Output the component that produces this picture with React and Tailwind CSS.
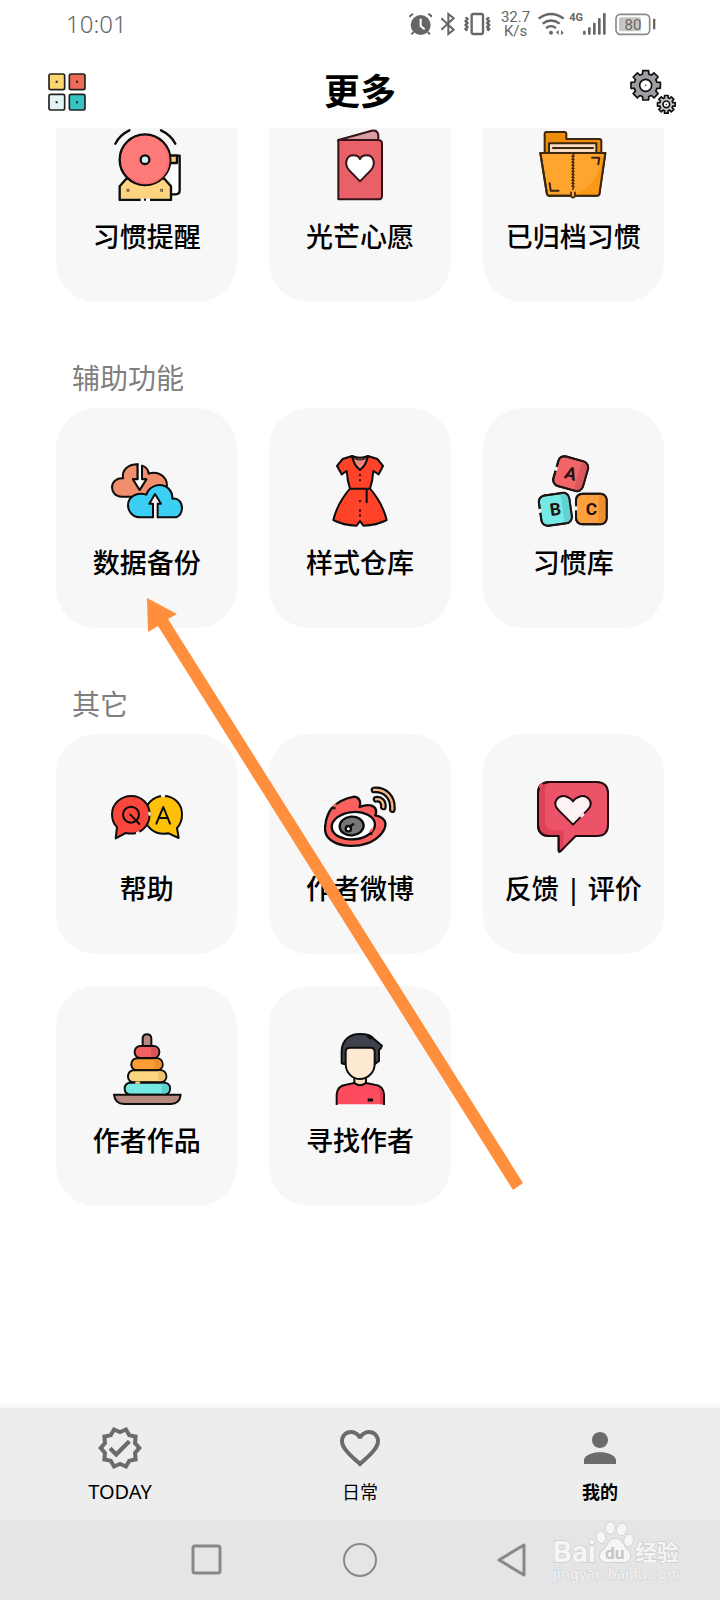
import React, { useState } from 'react';
import { MdFavoriteBorder, MdOutlineVerified, MdPerson } from 'react-icons/md';

const INK = '#0d0d0d';

// Outline of a toothed wheel, eight teeth by default
const gearPath = (cx, cy, outer, inner, teeth = 8) => {
  const points = [];
  for (let i = 0; i < teeth; i++) {
    const base = (i * 2 * Math.PI) / teeth - Math.PI / 2;
    [
      [-0.27, inner],
      [-0.2, outer],
      [0.2, outer],
      [0.27, inner],
    ].forEach(([offset, r]) => {
      points.push(`${(cx + r * Math.cos(base + offset)).toFixed(1)} ${(cy + r * Math.sin(base + offset)).toFixed(1)}`);
    });
  }
  return `M${points.join('L')}Z`;
};

const TileIcon = ({ children, stroke = INK, width = 6 }) => (
  <svg
    viewBox="0 0 216 216"
    className="size-[72px]"
    fill="none"
    stroke={stroke}
    strokeWidth={width}
    strokeLinecap="round"
    strokeLinejoin="round"
    aria-hidden="true"
  >
    {children}
  </svg>
);

const BellIcon = () => (
  <TileIcon width={7}>
    <path d="M13 44Q26 18 55 4M150 4Q180 18 193 44" />
    <path d="M181 80H206V184Q206 196 194 196H181" fill="#fff" />
    <path d="M176 80H198V102H180" fill="#f8cd7b" />
    <path d="M26 213V172L46 149H160L180 172V213Z" fill="#fdd580" />
    <circle cx="102" cy="92" r="76" fill="#fd7a79" />
    <path d="M160 52A70 70 0 0 1 68 154" stroke="#f06a6c" strokeWidth="4" />
    <circle cx="102" cy="92" r="13" fill="#d9f3f3" />
    <circle cx="51" cy="184" r="1" />
    <circle cx="152" cy="184" r="1" />
    <path d="M89 212H117" stroke="#fff" strokeWidth="8" strokeLinecap="butt" />
    <path d="M102 212h.1" />
  </TileIcon>
);

const WishIcon = () => (
  <TileIcon stroke="#351419">
    <path d="M43 33L143 5Q160 2 163 18V36H43Z" fill="#d99ca0" />
    <path d="M43 33H163Q174 34 174 44V200Q174 211 163 211H43Z" fill="#e96168" />
    <path
      d="M108 157L76 124C58 104 68 79 88 79C98 79 105 84 108 90C111 84 118 79 128 79C148 79 158 104 140 124Z"
      fill="#fff"
    />
  </TileIcon>
);

const FolderIcon = () => (
  <TileIcon stroke="#3b2610">
    <path d="M23 74V14Q23 9 28 9H82Q88 9 88 15V30H187Q193 30 193 36V74Z" fill="#ee8d0c" />
    <path d="M36 72V43H178V72" fill="#fbdcc3" />
    <path d="M48 57H168" />
    <path d="M10 72H205L187 196Q186 200 181 200H36Q31 200 30 196Z" fill="#ffa42d" />
    <path d="M201 86L185 197H110C150 186 192 150 192 76H202Z" fill="#fb9815" stroke="none" />
    <path d="M10 72H205L187 196Q186 200 181 200H36Q31 200 30 196Z" />
    <path
      d="M111 76L105 82H111L105 91H111L105 100H111L105 109H111L105 118H111L105 127H111L105 136H111L105 145H111L105 154H111L105 163H111L105 172H111L107 182"
      strokeWidth="4"
    />
    <path d="M166 86H187L184 105M38 163L41 185H64" strokeLinecap="square" />
    <path d="M102 190V199Q103 206 108 206Q113 206 114 199V190" fill="#ffa42d" strokeWidth="5" />
  </TileIcon>
);

const CloudIcon = () => (
  <TileIcon>
    <path
      d="M60 125H32C12 125 3 110 3 97C3 80 18 68 36 70C32 46 50 28 80 28V73H66L86 105L106 73H93V32C106 36 112 46 113 56C140 46 168 64 168 92L140 125Z"
      fill="#f18e6d"
    />
    <path d="M80 28V73H66L86 105L106 73H93V32" fill="#fff" />
    <path
      d="M126 187H88C66 187 51 170 51 151C51 126 77 109 106 119C111 100 130 90 145 90C170 90 186 110 184 131C202 128 213 142 213 159C213 176 203 187 190 187H140"
      fill="#3bcff5"
    />
    <path d="M126 187V146H115L132 117L150 146H140V187" fill="#fbeef4" />
    <path d="M130 187H136" stroke="#fbeef4" strokeLinecap="butt" />
  </TileIcon>
);

const DressIcon = () => (
  <TileIcon>
    <path d="M84 3Q108 14 132 3L128 26L108 46L88 26Z" fill="#f0877f" />
    <path
      d="M84 3Q90 32 108 45Q126 32 132 3L160 12L177 33L164 58L148 48Q146 78 138 101Q176 145 188 195Q158 211 118 212L108 198L98 212Q58 211 28 195Q40 145 78 101Q70 78 68 48L53 58L39 33L56 12Z"
      fill="#ff4328"
    />
    <path d="M78 101H138M128 101V142" />
    <path d="M92 12Q108 19 124 12" strokeWidth="3" />
    <path d="M108 60v1M108 75v1M108 138v1M108 166v1M108 181v1" />
    <path d="M46 192L48 196M170 192L168 196" stroke="#c92712" strokeWidth="3" />
  </TileIcon>
);

const Block = ({ cx, cy, angle, letter, fill, shade }) => (
  <g transform={`translate(${cx} ${cy}) rotate(${angle})`}>
    <rect x="-46" y="-46" width="92" height="92" rx="19" fill={fill} />
    <path d="M22 -46H28Q46 -46 46 -28V28Q46 46 28 46H22Z" fill={shade} stroke="none" />
    <rect x="-46" y="-46" width="92" height="92" rx="19" />
    <path d="M-46 -8V4" stroke="#f7f7f7" strokeWidth="8" strokeLinecap="butt" />
    <text
      y="18"
      textAnchor="middle"
      stroke="none"
      fill="#201013"
      className="font-[family-name:Roboto,sans-serif] text-[52px] font-bold"
    >
      {letter}
    </text>
  </g>
);

const BlocksIcon = () => (
  <TileIcon stroke="#1c1413">
    <Block cx={101} cy={56} angle={16} letter="A" fill="#f26468" shade="#d9565d" />
    <Block cx={55} cy={163} angle={-8} letter="B" fill="#74e9e5" shade="#62d3d2" />
    <Block cx={163} cy={162} angle={0} letter="C" fill="#fd9f3c" shade="#ee8f2e" />
  </TileIcon>
);

const HelpIcon = () => (
  <TileIcon>
    <path
      d="M158 45C190 45 213 69 213 100C213 117 208 131 198 141L203 171L173 157C130 165 101 137 101 101C101 70 127 45 158 45Z"
      fill="#ffc107"
    />
    <path
      d="M61 45C92 45 116 69 116 100C116 137 85 165 44 156L14 172L18 138C8 129 3 115 3 100C3 69 29 45 61 45Z"
      fill="#fb463b"
    />
    <path d="M153 45h6M78 156l5-2M115 96l1 5" stroke="#f7f7f7" strokeWidth="7" />
    <circle cx="60" cy="101" r="24" />
    <path d="M58 101L85 129M136 128L157 78L177 128M143 111H171" />
  </TileIcon>
);

const WeiboIcon = () => (
  <TileIcon width={7}>
    <path
      d="M23 82C44 59 68 51 91 47C107 49 111 63 107 78C120 73 133 71 143 74C157 80 159 90 154 103C169 106 182 112 184 126C187 151 158 178 127 188C102 197 61 198 33 185C8 173 0 155 4 133C6 112 12 96 23 82Z"
      fill="#fb605d"
    />
    <ellipse cx="88" cy="134" rx="65" ry="41" transform="rotate(-5 88 134)" fill="#fff" />
    <ellipse cx="83" cy="135" rx="36" ry="28" transform="rotate(-5 83 135)" fill="#777" />
    <circle cx="73" cy="143" r="8" fill="#fff" />
    <path d="M79 136L88 130" />
    <path d="M29 76L35 71M139 151L145 145" stroke="#fb605d" />
    <path d="M31 81v1M142 158v1" />
    <path d="M150 27C184 25 208 48 205 86" strokeWidth="20" />
    <path d="M156 55C169 52 180 62 178 78" strokeWidth="20" />
    <path d="M150 27C184 25 208 48 205 86M156 55C169 52 180 62 178 78" stroke="#f8b98a" />
  </TileIcon>
);

const FeedbackIcon = () => (
  <TileIcon stroke="#210b0e">
    <path
      d="M37 3H179Q213 4 213 37V132Q213 165 179 165H116L70 211Q65 215 65 208V165H37Q3 164 3 131V37Q3 4 37 3Z"
      fill="#ec5369"
    />
    <path
      d="M37 5Q24 12 24 38V118Q24 148 54 148H80V165L79 200L68 210L67 163H37Q6 162 6 131V37Q6 7 37 5Z"
      fill="#dd4259"
      stroke="none"
    />
    <path d="M79 202L70 211Q65 215 65 208V165H37Q3 164 3 131V37Q3 4 37 3" />
    <path d="M9 17L15 10" stroke="#ec5369" strokeWidth="7" />
    <path
      d="M108 131L66 89C40 63 67 36 91 48C100 51 105 56 108 61C111 56 116 51 125 48C149 36 176 63 150 89Z"
      fill="#fdf3f4"
    />
    <path d="M133 106L139 100" stroke="#fdf3f4" strokeWidth="7" />
  </TileIcon>
);

const RINGS = [
  { x: 71, y: 39, w: 74, fill: '#f3605f', shade: '#d95459' },
  { x: 61, y: 76, w: 94, fill: '#fd9d38', shade: '#ed8d2d' },
  { x: 51, y: 112, w: 115, fill: '#fbd57f', shade: '#efc370' },
  { x: 41, y: 149, w: 136, fill: '#74e8e3', shade: '#60d0d0' },
];

const StackIcon = () => (
  <TileIcon>
    <path d="M95 40V16Q96 4 108 4Q120 4 121 16V40" fill="#b58880" />
    {RINGS.map((ring) => (
      <g key={ring.y}>
        <rect x={ring.x} y={ring.y} width={ring.w} height="36" rx="17" fill={ring.fill} />
        <path
          d={`M${ring.x + ring.w - 25} ${ring.y + 3}h8q14 2 14 15t-14 15h-8Z`}
          fill={ring.shade}
          stroke="none"
        />
      </g>
    ))}
    <path d="M9 185H209Q207 213 179 213H39Q12 213 9 185Z" fill="#b58880" />
    <path d="M76 149h8" stroke="#fbd57f" strokeWidth="7" />
  </TileIcon>
);

const PersonIcon = () => (
  <TileIcon>
    <path
      d="M53 91V54C54 20 78 3 108 3C128 3 143 8 150 18L174 38Q171 48 165 51V84L153 93H60Z"
      fill="#3f424d"
    />
    <path d="M91 134V150Q108 164 126 150V134Z" fill="#fbe0c2" />
    <path d="M38 214V184Q40 158 66 155L91 150Q108 164 126 150L152 155Q178 158 180 184V214" fill="#fc4c5e" />
    <path d="M154 158Q176 161 177 186V214H168V184Q168 166 154 158Z" fill="#dd3d50" stroke="none" />
    <path d="M65 56Q65 44 78 44H140Q152 44 152 56V92C152 120 130 138 108 138C86 138 65 120 65 92Z" fill="#feead2" />
    <path d="M134 11L140 15" strokeWidth="9" />
    <path d="M131 201H147" strokeWidth="9" strokeLinecap="butt" />
  </TileIcon>
);

const MenuIcon = () => (
  <svg viewBox="0 0 114 114" className="size-[38px]" stroke="#26211f" strokeWidth="5" aria-hidden="true">
    <rect x="3" y="3" width="47" height="47" rx="5" fill="#fbd56d" />
    <rect x="64" y="3" width="47" height="47" rx="5" fill="#ec6b57" />
    <rect x="3" y="64" width="47" height="47" rx="5" fill="#e2f3f5" />
    <rect x="64" y="64" width="47" height="47" rx="5" fill="#35c4c2" />
    <path d="M23 26h6M84 26h6M23 88h6M84 88h6" strokeWidth="6" />
  </svg>
);

const GearsIcon = () => (
  <svg viewBox="0 0 138 138" className="size-[46px]" stroke="#111" strokeWidth="5" strokeLinejoin="round" aria-hidden="true">
    <path d={gearPath(47, 49, 45, 35)} fill="#9e9ea3" />
    <circle cx="47" cy="49" r="18" fill="#fff" />
    <circle cx="47" cy="49" r="1" strokeWidth="3" />
    <path d={gearPath(109, 106, 27, 20)} fill="#c9c9ce" />
    <circle cx="109" cy="106" r="10" fill="#fff" />
    <circle cx="109" cy="106" r="1" strokeWidth="3" />
  </svg>
);

const StatusBar = () => (
  <div className="flex h-12 items-center justify-between pr-16 pl-[66px] text-[#666]">
    <time className="font-['Noto_Sans',sans-serif] text-2xl font-light">10:01</time>
    <div className="flex h-6 items-center">
      <svg viewBox="0 0 72 72" className="h-6 w-6" fill="none" stroke="currentColor" strokeWidth="6" aria-hidden="true">
        <circle cx="38" cy="39" r="30" fill="currentColor" stroke="none" />
        <path d="M38 20V42L50 52" stroke="#fff" strokeWidth="6" />
        <path d="M4 14L15 5M61 5L72 14M17 60L10 67M59 60L66 67" />
      </svg>
      <svg viewBox="0 0 48 72" className="ml-2 h-6 w-4" fill="none" stroke="currentColor" strokeWidth="6" aria-hidden="true">
        <path d="M4 19L41 53L25 66V6L41 19L4 53" />
      </svg>
      <svg viewBox="0 0 81 72" className="ml-2 h-6 w-[27px]" fill="none" stroke="currentColor" aria-hidden="true">
        <rect x="23" y="6" width="34" height="60" rx="5" strokeWidth="7" />
        <path
          d="M5 16L10 21L5 27L10 33L5 39L10 45L5 51L10 56M75 16L70 21L75 27L70 33L75 39L70 45L75 51L70 56"
          strokeWidth="8"
        />
      </svg>
      <div className="ml-2.5 flex flex-col items-center font-[family-name:Roboto,sans-serif] text-[15px] leading-[14px]">
        <span>32.7</span>
        <span>K/s</span>
      </div>
      <svg viewBox="0 0 81 72" className="ml-2 h-6 w-[27px]" fill="none" stroke="currentColor" strokeWidth="7" aria-hidden="true">
        <path d="M2 20Q39 -8 77 20M14 35Q39 16 65 35M24 48Q39 37 54 48" />
        <circle cx="39" cy="62" r="6" fill="currentColor" stroke="none" />
        <path d="M62 54V69L54 61ZM69 54V69L77 63Z" fill="currentColor" stroke="none" />
      </svg>
      <span className="ml-1 self-start font-[family-name:Roboto,sans-serif] text-[11px] leading-3 font-bold">4G</span>
      <svg viewBox="0 0 72 72" className="h-6 w-6" fill="currentColor" aria-hidden="true">
        <rect x="0" y="56" width="8" height="12" rx="3" />
        <rect x="15" y="46" width="8" height="22" rx="3" />
        <rect x="30" y="32" width="8" height="36" rx="3" />
        <rect x="45" y="18" width="8" height="50" rx="3" />
        <rect x="60" y="3" width="8" height="65" rx="3" />
      </svg>
      <svg viewBox="0 0 123 72" className="ml-2 h-6 w-[41px]" fill="none" aria-hidden="true">
        <rect x="3" y="7" width="101" height="60" rx="13" stroke="#8a8a8a" strokeWidth="5" />
        <rect x="12" y="16" width="66" height="42" rx="5" fill="#c6c6c6" />
        <rect x="114" y="20" width="7" height="32" rx="2" fill="currentColor" />
        <text
          x="54"
          y="53"
          textAnchor="middle"
          fill="currentColor"
          className="font-[family-name:Roboto,sans-serif] text-[45px]"
        >
          80
        </text>
      </svg>
    </div>
  </div>
);

const SECTIONS = [
  {
    title: null,
    items: [
      { label: '习惯提醒', icon: BellIcon },
      { label: '光芒心愿', icon: WishIcon },
      { label: '已归档习惯', icon: FolderIcon },
    ],
  },
  {
    title: '辅助功能',
    items: [
      { label: '数据备份', icon: CloudIcon },
      { label: '样式仓库', icon: DressIcon },
      { label: '习惯库', icon: BlocksIcon },
    ],
  },
  {
    title: '其它',
    items: [
      { label: '帮助', icon: HelpIcon },
      { label: '作者微博', icon: WeiboIcon },
      { label: '反馈 | 评价', icon: FeedbackIcon },
      { label: '作者作品', icon: StackIcon },
      { label: '寻找作者', icon: PersonIcon },
    ],
  },
];

const Tile = ({ label, icon: Icon }) => (
  <button
    type="button"
    className="flex flex-col items-center rounded-[40px] bg-[#f7f7f7] py-[47px] text-[27px] leading-9 font-medium whitespace-nowrap text-black"
  >
    <Icon />
    <span className="mt-[18px]">{label}</span>
  </button>
);

const Section = ({ title, items }) => (
  <section>
    {title && <h2 className="mb-3 px-4 text-[28px] leading-9 text-[#7f7f7f]">{title}</h2>}
    <div className="grid grid-cols-3 gap-8">
      {items.map((item) => (
        <Tile key={item.label} {...item} />
      ))}
    </div>
  </section>
);

const TABS = [
  { id: 'today', label: 'TODAY', icon: MdOutlineVerified, text: 'text-xl' },
  { id: 'daily', label: '日常', icon: MdFavoriteBorder, text: 'text-lg' },
  { id: 'mine', label: '我的', icon: MdPerson, text: 'text-lg' },
];

const TabBar = ({ active, onChange }) => (
  <nav className="grid h-28 grid-cols-3 bg-[#ededed] shadow-[0_-2px_6px_rgba(0,0,0,0.05)]">
    {TABS.map(({ id, label, icon: Icon, text }) => (
      <button
        key={id}
        type="button"
        onClick={() => onChange(id)}
        className="flex flex-col items-center justify-center gap-2"
      >
        <Icon className="size-12 text-[#6b6b6b]" />
        <span className={`${text} leading-6 text-black ${active === id ? 'font-bold' : 'font-normal'}`}>{label}</span>
      </button>
    ))}
  </nav>
);

const Watermark = () => (
  <svg
    viewBox="0 0 384 192"
    className="pointer-events-none absolute right-10 bottom-4 h-16 w-32"
    fill="#f6f6f6"
    stroke="#cdcdcd"
    strokeWidth="4"
    paintOrder="stroke"
    aria-hidden="true"
  >
    <text x="2" y="126" className="font-[family-name:Roboto,sans-serif] text-[90px] font-bold">Bai</text>
    <ellipse cx="147" cy="52" rx="13" ry="18" transform="rotate(-12 147 52)" />
    <ellipse cx="175" cy="24" rx="13" ry="18" />
    <ellipse cx="209" cy="28" rx="14" ry="18" transform="rotate(12 209 28)" />
    <ellipse cx="230" cy="61" rx="13" ry="18" transform="rotate(16 230 61)" />
    <path d="M190 56C212 56 214 78 226 90C240 104 238 126 216 126H164C140 126 138 102 154 90C168 80 168 56 190 56Z" />
    <text
      x="188"
      y="116"
      textAnchor="middle"
      fill="#c6c6c6"
      stroke="none"
      className="font-[family-name:Roboto,sans-serif] text-[52px] font-bold"
    >
      du
    </text>
    <text x="250" y="120" className="font-['Noto_Sans_CJK_SC',sans-serif] text-[65px] font-bold">经验</text>
    <text x="4" y="176" strokeWidth="3" className="font-['Noto_Sans',sans-serif] text-[44px]">jingyan.baidu.com</text>
  </svg>
);

const SystemBar = () => (
  <div className="relative flex h-20 items-center justify-center gap-[114px] bg-[#e5e5e5] text-[#888]">
    <button type="button" aria-label="recent apps" className="flex size-10 items-center justify-center">
      <svg viewBox="0 0 36 36" className="size-9" fill="none" stroke="currentColor" strokeWidth="3">
        <rect x="5" y="4" width="27" height="27" rx="2" />
      </svg>
    </button>
    <button type="button" aria-label="home" className="flex size-10 items-center justify-center">
      <svg viewBox="0 0 36 36" className="size-9" fill="none" stroke="currentColor" strokeWidth="2">
        <circle cx="18" cy="18" r="16" />
      </svg>
    </button>
    <button type="button" aria-label="back" className="flex size-10 items-center justify-center">
      <svg viewBox="0 0 36 36" className="size-9" fill="none" stroke="currentColor" strokeWidth="3" strokeLinejoin="round">
        <path d="M28 3V33L3 18Z" />
      </svg>
    </button>
    <Watermark />
  </div>
);

const PointerArrow = () => (
  <svg
    width="400"
    height="610"
    viewBox="140 590 400 610"
    className="pointer-events-none absolute top-[590px] left-[140px]"
    fill="#ff8f3c"
    aria-hidden="true"
  >
    <path d="M147 598L177 614L168 619L523 1183L513 1190L158 626L148 632Z" />
  </svg>
);

export default function App() {
  const [tab, setTab] = useState('mine');

  return (
    <div className="relative flex min-h-screen flex-col bg-white font-['Noto_Sans','Noto_Sans_CJK_SC',sans-serif]">
      <StatusBar />
      <header className="flex h-20 items-center justify-between pt-2 pr-11 pl-12">
        <button type="button" aria-label="menu" className="flex w-11">
          <MenuIcon />
        </button>
        <h1 className="text-4xl font-bold text-black">更多</h1>
        <button type="button" aria-label="settings" className="flex w-12 justify-end">
          <GearsIcon />
        </button>
      </header>
      <main className="flex-1 overflow-hidden">
        {/* the list is scrolled a little, so the first row is cut by the header */}
        <div className="-mt-[46px] flex flex-col gap-[58px] px-14">
          {SECTIONS.map((section, index) => (
            <Section key={index} {...section} />
          ))}
        </div>
      </main>
      <TabBar active={tab} onChange={setTab} />
      <SystemBar />
      <PointerArrow />
    </div>
  );
}
